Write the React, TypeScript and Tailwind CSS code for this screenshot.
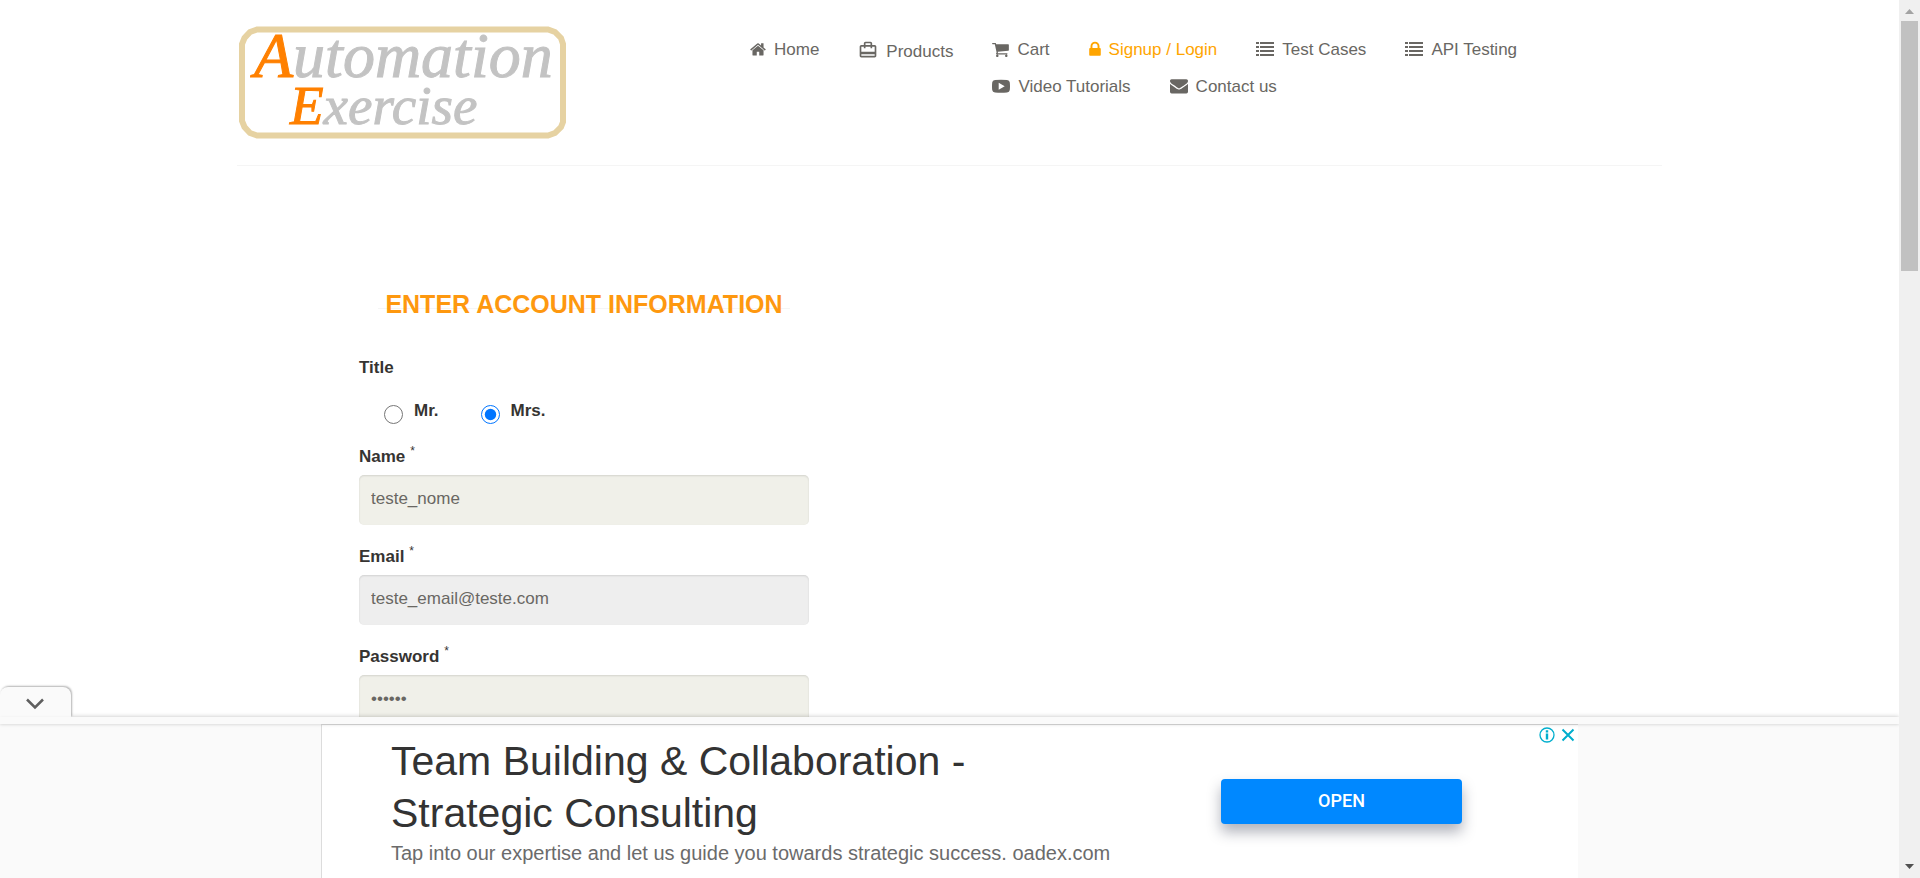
import type { ReactNode } from "react";
import { MdCardTravel } from "react-icons/md";

function Glyph({ box, className, children }: { box: string; className: string; children: ReactNode }) {
  return (
    <svg viewBox={box} className={`shrink-0 fill-current ${className}`} aria-hidden="true">
      {children}
    </svg>
  );
}

const HomeIcon = () => (
  <Glyph box="64 64 1664 1792" className="h-[18px] w-4">
    <path d="M1472 992v480q0 26-19 45t-45 19h-384v-384h-256v384h-384q-26 0-45-19t-19-45v-480q0-1 .5-3t.5-3l575-474 575 474q1 2 1 6zm223-69l-62 74q-8 9-21 11h-3q-13 0-21-7l-692-577-692 577q-12 8-24 7-13-2-21-11l-62-74q-8-10-7-23.5t11-21.5l719-599q32-26 76-26t76 26l244 204v-195q0-14 9-23t23-9h192q14 0 23 9t9 23v408l219 182q10 8 11 21.5t-7 23.5z" />
  </Glyph>
);

const CartIcon = () => (
  <Glyph box="64 64 1664 1792" className="h-[18px] w-[17px]">
    <path d="M704 1536q0 52-38 90t-90 38-90-38-38-90 38-90 90-38 90 38 38 90zm896 0q0 52-38 90t-90 38-90-38-38-90 38-90 90-38 90 38 38 90zm128-1088v512q0 24-16.5 42.5t-40.5 21.5l-1044 122q13 60 13 70 0 16-24 64h920q26 0 45 19t19 45-19 45-45 19h-1024q-26 0-45-19t-19-45q0-11 8-31.5t16-36 21.5-40 15.5-29.5l-177-823h-204q-26 0-45-19t-19-45 19-45 45-19h256q16 0 28.5 6.5t19.5 15.5 13 24.5 8 26 5.5 29.5 4.5 26h1201q26 0 45 19t19 45z" />
  </Glyph>
);

const LockIcon = () => (
  <Glyph box="320 64 1152 1792" className="h-[18px] w-3">
    <path d="M640 768h512v-192q0-106-75-181t-181-75-181 75-75 181v192zm832 96v576q0 40-28 68t-68 28h-960q-40 0-68-28t-28-68v-576q0-40 28-68t68-28h32v-192q0-184 132-316t316-132 316 132 132 316v192h32q40 0 68 28t28 68z" />
  </Glyph>
);

const ListIcon = () => (
  <Glyph box="0 0 18 18" className="size-[18px]">
    <path d="M0 1h3v2H0zM4 1h14v2H4zM0 5h3v2H0zM4 5h14v2H4zM0 9h3v2H0zM4 9h14v2H4zM0 13h3v2H0zM4 13h14v2H4z" />
  </Glyph>
);

const VideoIcon = () => (
  <Glyph box="0 0 18 18" className="size-[18px]">
    <path
      fillRule="evenodd"
      d="M3 2Q9 1.4 15 2Q17.6 2.200 17.800 4.500Q18.200 8.500 17.800 12Q17.500 14.300 15 14.500Q9 15.100 3 14.500Q.5 14.300 .2 12Q-.2 8.500 .2 4.500Q.4 2.200 3 2zM6.700 4.800v7l6-3.500z"
    />
  </Glyph>
);

const MailIcon = () => (
  <Glyph box="0 128 1792 1792" className="size-[18px]">
    <path d="M1792 710v794q0 66-47 113t-113 47h-1472q-66 0-113-47t-47-113v-794q44 49 101 87 362 246 497 345 57 42 92.500 65.500t94.500 48 110 24.500h2q51 0 110-24.500t94.500-48 92.500-65.500q170-123 498-345 57-39 100-87zm0-294q0 79-49 151t-122 123q-376 261-468 325-10 7-42.500 31t-54 38.500-52 32.500-57.500 27-50 9h-2q-23 0-50-9t-57.500-27-52-32.500-54-38.500-42.500-31q-91-64-262-182.500t-205-142.500q-62-42-117-115.500t-55-136.500q0-78 41.500-130t118.500-52h1472q65 0 112.500 47t47.500 113z" />
  </Glyph>
);

function NavLink({ icon, active, children }: { icon: ReactNode; active?: boolean; children: ReactNode }) {
  return (
    <a href="#" className={`flex items-center gap-2 whitespace-nowrap ${active ? "text-[#ffa500]" : "text-[#696763]"}`}>
      {icon}
      {children}
    </a>
  );
}

function Logo() {
  return (
    <a href="#" aria-label="Automation Exercise">
      <svg viewBox="0 0 328 114" className="h-[114px] w-[328px] overflow-visible italic">
        <path
          d="M18 3.500H309L316 6L322 12L324 18V96L322 101L316 107L309 109.500H18L11 107L5.500 101L3 95V18L5.500 12L11 6Z"
          fill="none"
          stroke="#e6d2a2"
          strokeWidth="6"
        />
        <g fontFamily="Liberation Serif, serif" stroke="currentColor" className="text-[#c3c3c3]">
          <text x="15" y="51" fontSize="64" fill="currentColor">
            <tspan fill="#ff8000" stroke="#ff8000">A</tspan>utomation
          </text>
          <text x="51" y="98" fontSize="55" fill="currentColor">
            <tspan fill="#ff8000" stroke="#ff8000">E</tspan>xercise
          </text>
        </g>
      </svg>
    </a>
  );
}

interface FieldProps {
  id: string;
  label: string;
  type: string;
  value: string;
  disabled?: boolean;
}

function Field({ id, label, type, value, disabled }: FieldProps) {
  return (
    <div className="mb-5">
      <label htmlFor={id} className="flex h-[30px] gap-[5px] leading-6 font-bold">
        {label} <span className="text-[12px] leading-3 font-normal">*</span>
      </label>
      <input
        id={id}
        type={type}
        defaultValue={value}
        disabled={disabled}
        className={`block h-[50px] w-full rounded-[5px] px-3 pb-[2px] text-[#696763] shadow-[inset_0_1px_2px_rgba(0,0,0,0.12)] outline-none ${
          disabled ? "bg-[#eeeeee]" : "bg-[#f0f0e9]"
        }`}
      />
    </div>
  );
}

function Header() {
  return (
    <header className="flex items-start justify-between border-b border-[#f5f5f5] pt-[26px] pb-[25px]">
      <div className="pl-[2px]">
        <Logo />
      </div>
      <nav className="mr-14 flex w-[856px] gap-[39px] pt-[14px] leading-5">
        <div>
          <NavLink icon={<HomeIcon />}>Home</NavLink>
        </div>
        <div>
          <NavLink icon={<MdCardTravel className="mb-1 size-5" />}>Products</NavLink>
        </div>
        <div className="flex flex-1 flex-wrap gap-x-[39px] gap-y-[17px]">
          <NavLink icon={<CartIcon />}>Cart</NavLink>
          <NavLink icon={<LockIcon />} active>
            Signup / Login
          </NavLink>
          <NavLink icon={<ListIcon />}>Test Cases</NavLink>
          <NavLink icon={<ListIcon />}>API Testing</NavLink>
          <NavLink icon={<VideoIcon />}>Video Tutorials</NavLink>
          <NavLink icon={<MailIcon />}>Contact us</NavLink>
        </div>
      </nav>
    </header>
  );
}

function AccountForm() {
  return (
    <form className="mt-[122px] ml-[122px] w-[450px] text-[#363432]">
      <h2 className="relative mx-[19px] flex justify-center text-[25px] leading-8 font-bold whitespace-nowrap text-[#fe980f]">
        <span className="absolute inset-x-0 top-[20px] h-px bg-[#f5f5f5]" />
        <span className="relative">ENTER ACCOUNT INFORMATION</span>
      </h2>
      <fieldset className="mt-[38px]">
        <legend className="leading-5 font-bold">Title</legend>
        <div className="mt-[23px] flex pl-[25px] leading-5 font-bold">
          <label className="mr-[42px] flex gap-[11px]">
            <input type="radio" name="title" className="mt-1 size-[19px]" />
            Mr.
          </label>
          <label className="flex gap-[11px]">
            <input type="radio" name="title" defaultChecked className="mt-1 size-[19px]" />
            Mrs.
          </label>
        </div>
      </fieldset>
      <div className="mt-[21px]">
        <Field id="name" label="Name" type="text" value="teste_nome" />
        <Field id="email" label="Email" type="email" value="teste_email@teste.com" disabled />
        <Field id="password" label="Password" type="password" value="secret" />
      </div>
    </form>
  );
}

function AdBar() {
  return (
    <aside className="relative z-10 shrink-0 bg-[#fafafa] shadow-[0_-1px_4px_rgba(0,0,0,0.15)]">
      <button
        type="button"
        aria-label="Collapse"
        className="absolute bottom-full left-0 flex h-[30px] w-[71px] items-center justify-center rounded-t-lg bg-[#fafafa] pr-px pt-1 shadow-[1px_-1px_2px_rgba(0,0,0,0.3)]"
      >
        <svg viewBox="0 0 18 12" className="h-3 w-[18px]" fill="none" stroke="#5f5f5f" strokeWidth="2.500">
          <path d="M1 1.500L9 9.500L17 1.500" />
        </svg>
      </button>
      <div className="relative h-[7px] bg-[#fafafa] shadow-[0_1px_3px_rgba(0,0,0,0.12)]" />
      <div className="mx-auto flex h-[154px] w-[1257px] max-w-full border-t border-l border-[#dcdcdc] bg-white">
        <div className="w-[899px] shrink-0 pl-[69px]">
          <h3 className="w-[640px] pt-[10px] text-[41px] leading-[52px] text-[#333333]">
            Team Building &amp; Collaboration - Strategic Consulting
          </h3>
          <p className="text-[20px] leading-7 text-[#6b6b6b]">
            Tap into our expertise and let us guide you towards strategic success. oadex.com
          </p>
        </div>
        <a
          href="#"
          className="mt-[54px] flex h-[45px] w-[241px] items-center justify-center rounded-[4px] bg-[#0088ff] pb-[2px] font-[Roboto,sans-serif] text-[18px] font-medium text-white shadow-[0_8px_14px_rgba(30,35,60,0.35)]"
        >
          OPEN
        </a>
        <div className="ml-auto flex items-start gap-[5px] pt-[2px] pr-[2px] text-[#00aecd]">
          <button type="button" aria-label="About this ad">
            <svg viewBox="0 0 16 16" className="size-4" fill="none" stroke="currentColor">
              <circle cx="8" cy="8" r="7" strokeWidth="1.300" />
              <path d="M8 3.200v2.200M8 6.500v6" strokeWidth="2.400" />
            </svg>
          </button>
          <button type="button" aria-label="Close ad">
            <svg viewBox="0 0 16 16" className="size-4" fill="none" stroke="currentColor" strokeWidth="2">
              <path d="M2.500 2.500L13.500 13.500M13.500 2.500L2.500 13.500" />
            </svg>
          </button>
        </div>
      </div>
    </aside>
  );
}

function ScrollTrack() {
  return (
    <div className="relative z-20 flex w-[21px] shrink-0 flex-col items-center bg-[#f0f0f0]" aria-hidden="true">
      <svg viewBox="0 0 21 21" className="h-[21px] w-[21px] shrink-0">
        <path d="M6 14L10.500 9L15 14Z" fill="#a3a3a3" />
      </svg>
      <div className="h-[250px] w-[17px] bg-[#c1c1c1]" />
      <svg viewBox="0 0 21 21" className="mt-auto h-[21px] w-[21px] shrink-0">
        <path d="M6 7L10.500 12L15 7Z" fill="#505050" />
      </svg>
    </div>
  );
}

export default function App() {
  return (
    <div className="flex h-screen bg-white font-['Liberation_Sans',Arial,sans-serif] text-[17px]">
      <div className="flex min-w-0 flex-1 flex-col">
        <main className="min-h-0 flex-1 overflow-hidden">
          <div className="mx-auto max-w-[1425px]">
            <Header />
            <AccountForm />
          </div>
        </main>
        <AdBar />
      </div>
      <ScrollTrack />
    </div>
  );
}
